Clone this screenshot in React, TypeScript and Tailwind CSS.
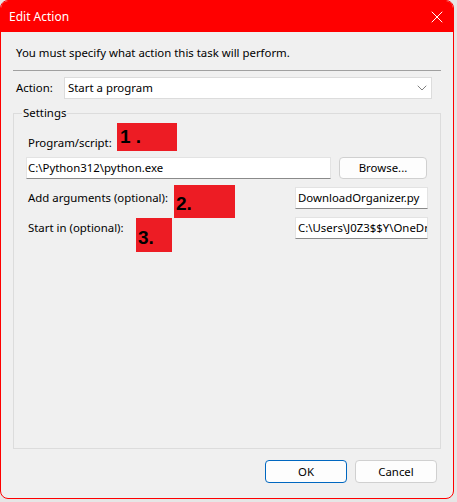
import { X, ChevronDown } from "lucide-react";

const ui = { fontFamily: '"Segoe UI", "Noto Sans", sans-serif' };

function Field({ value, className }: { value: string; className: string }) {
  return (
    <div
      className={`flex h-[22px] items-center overflow-hidden whitespace-nowrap border border-[#e3e3e3] border-b-[#8a8a8a] bg-white text-[11.4px] text-black ${className}`}
    >
      {value}
    </div>
  );
}

function Mark({ label, className }: { label: string; className: string }) {
  return (
    <div
      className={`absolute flex items-end bg-[#ed1c24] pb-[5px] text-[19px] font-bold leading-none text-black ${className}`}
      style={{ fontFamily: '"Liberation Sans", Arial, sans-serif' }}
    >
      {label}
    </div>
  );
}

export default function App() {
  return (
    <div className="h-[502px] w-[457px] bg-[#e6e6e6]" style={ui}>
      <div className="relative flex h-[499px] w-[454px] flex-col overflow-hidden rounded-[8px] border border-[#ff0000] bg-[#f0f0f0]">
        {/* title bar */}
        <div className="flex h-[31px] shrink-0 items-center justify-between bg-[#ff0000] pl-[8px] pr-[6px] text-[12px] text-white">
          <span>Edit Action</span>
          <X size={20} strokeWidth={1.2} className="text-white" />
        </div>

        <div className="flex flex-1 flex-col px-[12px] text-[11.4px] text-black">
          <p className="mt-[13px] pl-[3px] leading-[16px]">
            You must specify what action this task will perform.
          </p>
          <div className="mt-[9px] h-px w-[428px] bg-[#a0a0a0]" />

          <div className="mt-[6px] flex items-center">
            <span className="w-[51px] pl-[3px]">Action:</span>
            <div className="flex h-[22px] w-[368px] items-center justify-between border border-[#dcdcdc] bg-white pl-[3px] pr-px">
              <span>Start a program</span>
              <ChevronDown size={16} strokeWidth={1.2} className="text-[#606060]" />
            </div>
          </div>

          {/* settings group */}
          <div className="relative mt-[14px] h-[336px] w-[428px] border border-[#dcdcdc] px-[12px]">
            <span className="absolute -top-[9px] left-[8px] bg-[#f0f0f0] px-px leading-[16px]">
              Settings
            </span>
            <p className="mt-[21px] pl-[2px] leading-[16px]">Program/script:</p>
            <div className="mt-[6px] flex items-start gap-[8px]">
              <Field value="C:\Python312\python.exe" className="h-[21px] w-[305px] pl-[1px]" />
              <button className="h-[22px] w-[88px] rounded-[4px] border border-[#d0d0d0] bg-[#fdfdfd] text-[11.4px]">
                Browse...
              </button>
            </div>
            <div className="mt-[8px] flex items-center justify-between">
              <span className="pl-[2px]">Add arguments (optional):</span>
              <Field value="DownloadOrganizer.py" className="w-[133px] pl-[2px]" />
            </div>
            <div className="mt-[8px] flex items-center justify-between">
              <span className="pl-[2px]">Start in (optional):</span>
              <Field value="C:\Users\J0Z3$$Y\OneDr" className="w-[133px] pl-[2px]" />
            </div>
          </div>

          <div className="mt-[11px] flex justify-end gap-[8px] pr-[4px]">
            <button className="h-[23px] w-[82px] rounded-[4px] border border-[#0067c0] bg-[#fdfdfd] text-[11.4px]">
              OK
            </button>
            <button className="h-[23px] w-[82px] rounded-[4px] border border-[#d0d0d0] bg-[#fdfdfd] text-[11.4px]">
              Cancel
            </button>
          </div>
        </div>

        <Mark label="1 ." className="left-[116px] top-[122px] h-[28px] w-[60px] pl-[3px]" />
        <Mark label="2." className="left-[173px] top-[184px] h-[33px] w-[61px] pl-[2px]" />
        <Mark label="3." className="left-[135px] top-[217px] h-[34px] w-[36px] pl-[2px]" />
      </div>
    </div>
  );
}
